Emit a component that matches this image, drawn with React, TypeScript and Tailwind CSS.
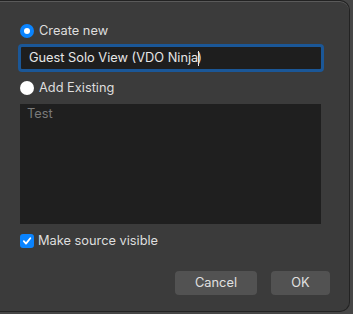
import React from "react";

export default function App() {
  return (
    <div className="w-[353px] h-[314px] bg-[#464646] overflow-hidden" style={{ fontFamily: '"Helvetica Neue", Inter, "Liberation Sans", Arial, sans-serif' }}>
      <div className="w-[350px] h-[312px] bg-[#3b3b3b] rounded-br-[10px] rounded-tr-[10px] border-r border-b border-t border-[#222222] shadow-[inset_0_1px_0_#5a5a5a] flex flex-col pl-[20px] pr-[28px] pt-[23px]">
        <div className="flex items-center gap-[5px] h-[14px]">
          <div className="w-[14px] h-[14px] rounded-full bg-[#0a84ff] flex items-center justify-center">
            <div className="w-[6px] h-[6px] rounded-full bg-white" />
          </div>
          <span className="text-[12.8px] text-[#dedede] leading-none">Create new</span>
        </div>
        <div className="mt-[6px] -ml-[2px] -mr-[3px] h-[28px] rounded-[4px] border-[3px] border-[#1b5797] bg-[#1e1e1e] flex items-center pl-[8px]">
          <span className="text-[12.8px] text-[#e6e6e6] leading-none">Guest Solo View (VDO Ninja</span>
          <span className="w-px h-[15px] bg-[#e6e6e6]" />
          <span className="text-[12.8px] text-[#e6e6e6] leading-none -ml-[2px]">)</span>
        </div>
        <div className="mt-[9px] flex items-center gap-[5px] h-[14px]">
          <div className="w-[14px] h-[14px] rounded-full bg-white" />
          <span className="text-[12.8px] text-[#dedede] leading-none">Add Existing</span>
        </div>
        <div className="mt-[9px] h-[120px] bg-[#1f1f1f] pl-[7px] pt-[4px]">
          <div className="text-[12.8px] text-[#7a7a7a] leading-none">Test</div>
        </div>
        <div className="mt-[10px] flex items-center gap-[4px] h-[14px]">
          <div className="w-[14px] h-[14px] rounded-[3px] bg-[#0a84ff] flex items-center justify-center">
            <svg width="10" height="10" viewBox="0 0 10 10">
              <path d="M1.8 5.2 L4 7.6 L8.3 2.2" stroke="white" strokeWidth="1.8" fill="none" strokeLinecap="round" strokeLinejoin="round" />
            </svg>
          </div>
          <span className="text-[12.8px] text-[#dedede] leading-none">Make source visible</span>
        </div>
        <div className="mt-[23px] flex justify-end gap-[14px] -mr-[9px]">
          <button className="w-[82px] h-[24px] rounded-[4px] bg-[#525252] text-[12.8px] text-[#e0e0e0] leading-none">Cancel</button>
          <button className="w-[59px] h-[24px] rounded-[4px] bg-[#525252] text-[12.8px] text-[#e0e0e0] leading-none">OK</button>
        </div>
      </div>
    </div>
  );
}
